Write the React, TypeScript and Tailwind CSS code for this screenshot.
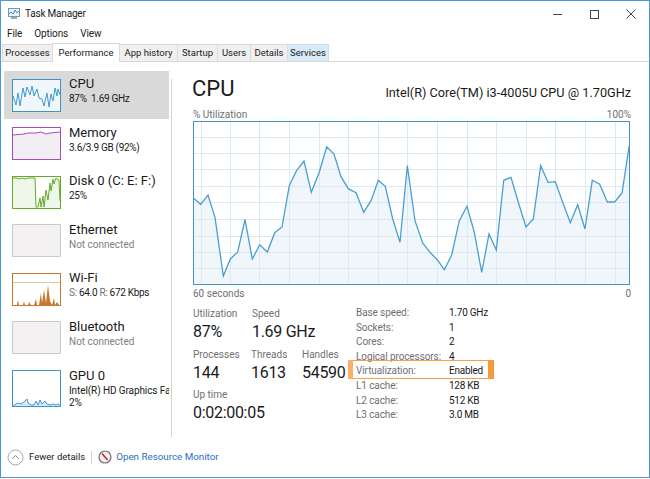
import React from "react";

const L: [number, number][] = [[25,297],[47,316],[69,288],[90,355],[115,531],[136,480],[158,459],[180,361],[202,480],[224,437],[247,459],[269,401],[291,384],[313,260],[335,214],[357,186],[379,280],[403,220],[425,143],[447,165],[468,233],[490,269],[513,281],[536,340],[558,305],[580,244],[601,262],[623,360],[645,430],[667,200]];
const R: [number, number][] = [[15,365],[38,432],[60,460],[82,482],[103,512],[125,468],[148,365],[171,322],[193,400],[215,520],[237,405],[259,453],[281,244],[303,235],[325,310],[348,384],[370,360],[392,200],[414,250],[436,248],[458,310],[481,371],[503,317],[525,390],[547,244],[569,256],[592,309],[614,309],[636,282],[658,140]];
const pts = [
  ...L.map(([x, y]) => [185 + x / 3 - 193, 100 + y / 3 - 122]),
  ...R.map(([x, y]) => [410 + x / 3 - 193, 100 + y / 3 - 122]),
];
const line = pts.map(([x, y]) => `${x.toFixed(1)},${y.toFixed(1)}`).join(" ");
const vx = [8, 37, 66, 96, 126, 155, 185, 214, 244, 274, 303, 333, 362, 392, 422];
const hy = [16, 32, 48, 65, 81, 98, 115, 131, 147];

function Graph() {
  return (
    <svg width="437" height="164" viewBox="0 0 437 164" className="block">
      <rect x="0.5" y="0.5" width="436" height="163" fill="#fff" />
      <polygon points={`0,163 ${line} 436,163`} fill="#f1f6fa" />
      {vx.map((x) => <line key={x} x1={x + 0.5} x2={x + 0.5} y1="0" y2="164" stroke="#d9eaf5" strokeWidth="1" />)}
      {hy.map((y) => <line key={y} x1="0" x2="437" y1={y + 0.5} y2={y + 0.5} stroke="#d9eaf5" strokeWidth="1" />)}
      <polyline points={line} fill="none" stroke="#4a9fd0" strokeWidth="1.3" />
      <rect x="0.5" y="0.5" width="436" height="163" fill="none" stroke="#3f93c9" strokeWidth="1" />
    </svg>
  );
}

function Thumb({ kind }: { kind: string }) {
  const base = "block shrink-0";
  if (kind === "cpu")
    return (
      <svg width="49" height="33" viewBox="0 0 49 33" className={base}>
        <rect x=".5" y=".5" width="48" height="32" fill="#f1f6fa" />
        <polyline points="1,17 4,26 6,14 8,27 11,9 13,18 15,8 18,16 20,7 22,17 25,10 27,19 30,20 32,27 35,14 37,28 39,15 41,22 43,9 45,17 46,10 48,16" fill="none" stroke="#3f9ad2" strokeWidth="1" />
        <rect x=".5" y=".5" width="48" height="32" fill="none" stroke="#3f93c9" />
      </svg>
    );
  if (kind === "mem")
    return (
      <svg width="49" height="33" viewBox="0 0 49 33" className={base}>
        <rect x=".5" y=".5" width="48" height="32" fill="#fff" />
        <polygon points="1,8 12,7 16,6 24,6 29,5 34,7 38,6 48,5 48,32 1,32" fill="#f2eff4" />
        <polyline points="1,8 12,7 16,6 24,6 29,5 34,7 38,6 48,5" fill="none" stroke="#a94bc0" strokeWidth="1" />
        <rect x=".5" y=".5" width="48" height="32" fill="none" stroke="#a94bc0" />
      </svg>
    );
  if (kind === "disk") {
    const p = "1,2 5,2 7,3 10,2 13,3 16,2 23,2 24,31 26,31 28,22 29,31 31,20 32,31 34,14 36,24 38,7 39,15 41,3 42,8 44,2 47,4 48,25";
    return (
      <svg width="49" height="33" viewBox="0 0 49 33" className={base}>
        <rect x=".5" y=".5" width="48" height="32" fill="#fff" />
        <polygon points={`${p} 48,32 1,32`} fill="#eff6ea" />
        <polyline points={p} fill="none" stroke="#64ad2c" strokeWidth="1" />
        <rect x=".5" y=".5" width="48" height="32" fill="none" stroke="#64ad2c" />
      </svg>
    );
  }
  if (kind === "wifi")
    return (
      <svg width="49" height="33" viewBox="0 0 49 33" className={base}>
        <rect x=".5" y=".5" width="48" height="32" fill="#fff" />
        <line x1="1" x2="48" y1="9.5" y2="9.5" stroke="#e6c3a2" />
        <polygon points="1,32 5,32 6,27 7,32 11,32 12,28 13,32 16,32 17,29 19,32 22,32 24,26 25,32 27,32 29,20 30,30 32,17 34,30 36,12 38,28 40,32 42,25 43,32 45,29 47,32 48,32" fill="#c7782e" />
        <rect x=".5" y=".5" width="48" height="32" fill="none" stroke="#c7782e" />
      </svg>
    );
  if (kind === "gpu") {
    const p = "1,36 4,34 6,33 9,34 12,32 15,29 16,33 19,35 22,35 24,31 26,35 28,30 30,34 33,31 35,34 38,35 41,34 44,35 46,34 48,35";
    return (
      <svg width="49" height="37" viewBox="0 0 49 37" className={base}>
        <rect x=".5" y=".5" width="48" height="36" fill="#fff" />
        <polygon points={`${p} 48,36 1,36`} fill="#d9ebf6" />
        <polyline points={p} fill="none" stroke="#3f9ad2" strokeWidth="1" />
        <rect x=".5" y=".5" width="48" height="36" fill="none" stroke="#3f93c9" />
      </svg>
    );
  }
  return <div className="w-[49px] h-[33px] shrink-0 bg-[#f3f1f2] border border-[#c9c9c9] rounded-[1px]" />;
}

const items = [
  { k: "cpu", t: "CPU", s: "87%  1.69 GHz", h: "h-[48px]", sel: true },
  { k: "mem", t: "Memory", s: "3.6/3.9 GB (92%)", h: "h-[49px]" },
  { k: "disk", t: "Disk 0 (C: E: F:)", s: "25%", h: "h-[48px]" },
  { k: "eth", t: "Ethernet", s: "Not connected", h: "h-[49px]", off: true },
  { k: "wifi", t: "Wi-Fi", s: "", h: "h-[48px]" },
  { k: "bt", t: "Bluetooth", s: "Not connected", h: "h-[49px]", off: true },
];

const tabs = [
  { t: "Processes", c: "w-[51px] bg-[#f0f0f0] h-[17px] border-[#d9d9d9]" },
  { t: "Performance", c: "w-[68px] bg-white h-[19px] border-[#d9d9d9] border-b-white -mb-px z-10" },
  { t: "App history", c: "w-[59px] bg-[#f0f0f0] h-[17px] border-[#d9d9d9]" },
  { t: "Startup", c: "w-[41px] bg-[#f0f0f0] h-[17px] border-[#d9d9d9]" },
  { t: "Users", c: "w-[34px] bg-[#f0f0f0] h-[17px] border-[#d9d9d9]" },
  { t: "Details", c: "w-[38px] bg-[#f0f0f0] h-[17px] border-[#d9d9d9]" },
  { t: "Services", c: "w-[42px] bg-[#d9eaf7] h-[17px] border-[#cfdfe9]" },
];

const spec = [
  ["Base speed:", "1.70 GHz"],
  ["Sockets:", "1"],
  ["Cores:", "2"],
  ["Logical processors:", "4"],
  ["Virtualization:", "Enabled"],
  ["L1 cache:", "128 KB"],
  ["L2 cache:", "512 KB"],
  ["L3 cache:", "3.0 MB"],
];

function Stat({ label, value, w }: { label: string; value: string; w: string }) {
  return (
    <div className={w}>
      <div className="text-[10px] leading-[15px] text-[#707070]">{label}</div>
      <div className="text-[16px] leading-[22px] tracking-[-0.3px] text-[#1a1a1a] whitespace-nowrap">{value}</div>
    </div>
  );
}

export default function App() {
  return (
    <div
      className="relative w-[650px] h-[478px] bg-white border border-[#4a9ad8] flex flex-col overflow-hidden text-[#1a1a1a]"
      style={{ fontFamily: 'Roboto, "Noto Sans", sans-serif' }}
    >
      <div className="h-[24px] shrink-0 flex items-center pl-[6px] pt-[1px]">
        <svg width="14" height="13" viewBox="0 0 14 13" className="mr-[4px]">
          <rect x="1.5" y="1.5" width="11" height="8" fill="#e8f2f8" stroke="#7b96a8" />
          <polyline points="2,7 4,5 6,7 8,3 10,6 12,4" fill="none" stroke="#3f93c9" />
          <rect x="4" y="10" width="6" height="2" fill="#9aa8b0" />
        </svg>
        <span className="text-[10px] tracking-[-0.2px]">Task Manager</span>
        <div className="ml-auto flex items-center text-[#444]">
          <svg width="10" height="10" viewBox="0 0 10 10" className="mr-[27px]"><line x1="1" x2="10" y1="5.5" y2="5.5" stroke="#444" /></svg>
          <svg width="10" height="10" viewBox="0 0 10 10" className="mr-[27px]"><rect x="1.5" y="1.5" width="8" height="8" fill="none" stroke="#444" /></svg>
          <svg width="10" height="10" viewBox="0 0 10 10" className="mr-[13px]"><path d="M.5.5l9 9M9.5.5l-9 9" stroke="#444" fill="none" /></svg>
        </div>
      </div>
      <div className="h-[17px] shrink-0 flex items-center gap-[12px] pl-[6px] text-[10px] tracking-[-0.1px]">
        <span>File</span><span>Options</span><span>View</span>
      </div>
      <div className="h-[20px] shrink-0 flex items-end pl-[1px] border-b border-[#d9d9d9]">
        {tabs.map((t) => (
          <div key={t.t} className={`flex items-center justify-center border border-b-0 -mr-px shrink-0 text-[9.5px] whitespace-nowrap ${t.c}`}>
            {t.t}
          </div>
        ))}
      </div>
      <div className="flex-1 flex min-h-0 relative">
        <div className="w-[170px] shrink-0 pt-[9px] pl-[3px] flex flex-col">
          {items.map((it) => (
            <div key={it.k} className={`${it.h} w-[165px] flex items-center pl-[8px] gap-[8px] shrink-0 ${it.sel ? "bg-[#d9d9d9]" : ""}`}>
              <Thumb kind={it.k} />
              <div className="min-w-0 -mt-[10px]">
                <div className="text-[13px] leading-[17px] whitespace-nowrap">{it.t}</div>
                <div className={`text-[10px] leading-[13px] whitespace-pre ${it.off ? "text-[#808080]" : "tracking-[-0.3px]"}`}>
                  {it.k === "wifi" ? (
                    <>
                      <span className="text-[#707070]">S: </span>64.0 <span className="text-[#707070]">R: </span>672 Kbps
                    </>
                  ) : (
                    it.s
                  )}
                </div>
              </div>
            </div>
          ))}
          <div className="w-[165px] flex items-start pl-[8px] gap-[8px] pt-[8px] h-[48px] shrink-0">
            <Thumb kind="gpu" />
            <div className="min-w-0 flex-1 overflow-hidden -mt-[3px]">
              <div className="text-[13px] leading-[17px]">GPU 0</div>
              <div className="text-[10px] leading-[13px] tracking-[-0.1px] whitespace-nowrap overflow-hidden">Intel(R) HD Graphics Family</div>
              <div className="text-[10px] leading-[12px]">2%</div>
            </div>
          </div>
        </div>
        <div className="w-px h-[358px] mt-[17px] bg-[#d4d4d4] shrink-0" />
        <div className="flex-1 min-w-0 pl-[21px] pt-[13px] pr-[18px]">
          <div className="flex items-end justify-between h-[28px]">
            <span className="text-[22px] leading-[28px] -ml-[1px]">CPU</span>
            <span className="text-[12.7px] leading-[20px] whitespace-nowrap">Intel(R) Core(TM) i3-4005U CPU @ 1.70GHz</span>
          </div>
          <div className="flex justify-between text-[10px] leading-[13px] text-[#707070] mt-[5px]">
            <span>% Utilization</span><span>100%</span>
          </div>
          <Graph />
          <div className="flex justify-between text-[10px] leading-[14px] text-[#707070] mt-[2px]">
            <span>60 seconds</span><span>0</span>
          </div>
          <div className="flex mt-[5px]">
            <div className="w-[163px] shrink-0">
              <div className="flex">
                <Stat label="Utilization" value="87%" w="w-[59px]" />
                <Stat label="Speed" value="1.69 GHz" w="w-[100px]" />
              </div>
              <div className="flex mt-[3.5px]">
                <Stat label="Processes" value="144" w="w-[58px]" />
                <Stat label="Threads" value="1613" w="w-[51px]" />
                <Stat label="Handles" value="54590" w="w-[54px]" />
              </div>
              <div className="mt-[3.5px]">
                <Stat label="Up time" value="0:02:00:05" w="w-[120px]" />
              </div>
            </div>
            <div className="grid grid-cols-[93px_auto] self-start text-[10px] leading-[14.6px] tracking-[-0.1px]">
              {spec.map(([a, b]) => (
                <React.Fragment key={a}>
                  <span className="text-[#707070] whitespace-nowrap">{a}</span>
                  <span className="whitespace-nowrap tracking-[-0.25px]">{b}</span>
                </React.Fragment>
              ))}
            </div>
          </div>
        </div>
      </div>
      <div className="h-[40px] shrink-0 flex items-center pl-[6px]">
        <svg width="17" height="17" viewBox="0 0 17 17" className="mr-[5px]">
          <circle cx="8.5" cy="8.5" r="7.5" fill="#fff" stroke="#a8a8a8" />
          <path d="M5 10l3.5-3.5L12 10" fill="none" stroke="#8a8a8a" />
        </svg>
        <span className="text-[9.5px]">Fewer details</span>
        <div className="w-px h-[13px] bg-[#d0d0d0] mx-[6px]" />
        <svg width="14" height="14" viewBox="0 0 14 14" className="mr-[4px]">
          <circle cx="7" cy="7" r="6" fill="#f4f1ea" stroke="#6f6f6f" strokeWidth="1.2" />
          <path d="M4 3.5L9.5 10" stroke="#c8232a" strokeWidth="1.5" />
        </svg>
        <span className="text-[9.8px] text-[#2a6fc0]">Open Resource Monitor</span>
      </div>
      <div className="absolute left-[347px] top-[359px] w-[146px] h-[19px] border border-[#f5a04a] pointer-events-none">
        <div className="absolute right-[-1px] top-[-1px] bottom-[-1px] w-[6px] bg-[#f89a3a]" />
        <div className="absolute left-[-1px] top-[-1px] bottom-[-1px] w-[5px] bg-[#fbb06a]" />
      </div>
    </div>
  );
}
